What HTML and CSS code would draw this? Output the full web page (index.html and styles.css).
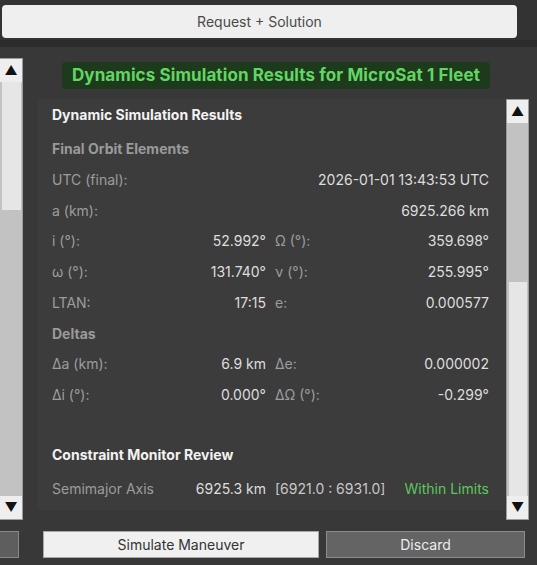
FILE: index.html
```html
<!DOCTYPE html>
<html lang="en">
<head>
    <meta charset="UTF-8">
    <meta name="viewport" content="width=device-width, initial-scale=1.0">
    <title>Dynamics Simulation Results</title>
    <link rel="stylesheet" href="styles.css">
</head>
<body>
    <div class="topbar">
        <button class="tab-button">Request + Solution</button>
    </div>
    <div class="divider"></div>

    <div class="main">
        <div class="scrollbar scrollbar-left">
            <div class="arrow">&#9650;</div>
            <div class="track">
                <div class="thumb thumb-left"></div>
            </div>
            <div class="arrow">&#9660;</div>
        </div>

        <div class="panel">
            <div class="title-wrap">
                <div class="title">Dynamics Simulation Results for MicroSat 1 Fleet</div>
            </div>

            <div class="results">
                <div class="card">
                    <div class="heading">Dynamic Simulation Results</div>

                    <div class="subheading first">Final Orbit Elements</div>
                    <div class="row">
                        <span class="label">UTC (final):</span>
                        <span class="value">2026-01-01 13:43:53 UTC</span>
                    </div>
                    <div class="row">
                        <span class="label">a (km):</span>
                        <span class="value">6925.266 km</span>
                    </div>
                    <div class="row split">
                        <div class="pair"><span class="label">i (°):</span><span class="value">52.992°</span></div>
                        <div class="pair"><span class="label">Ω (°):</span><span class="value">359.698°</span></div>
                    </div>
                    <div class="row split">
                        <div class="pair"><span class="label">ω (°):</span><span class="value">131.740°</span></div>
                        <div class="pair"><span class="label">ν (°):</span><span class="value">255.995°</span></div>
                    </div>
                    <div class="row split">
                        <div class="pair"><span class="label">LTAN:</span><span class="value">17:15</span></div>
                        <div class="pair"><span class="label">e:</span><span class="value">0.000577</span></div>
                    </div>

                    <div class="subheading">Deltas</div>
                    <div class="row split">
                        <div class="pair"><span class="label">Δa (km):</span><span class="value">6.9 km</span></div>
                        <div class="pair"><span class="label">Δe:</span><span class="value">0.000002</span></div>
                    </div>
                    <div class="row split">
                        <div class="pair"><span class="label">Δi (°):</span><span class="value">0.000°</span></div>
                        <div class="pair"><span class="label">ΔΩ (°):</span><span class="value">-0.299°</span></div>
                    </div>

                    <div class="heading monitor">Constraint Monitor Review</div>
                    <div class="row split check">
                        <div class="pair"><span class="label">Semimajor Axis</span><span class="value">6925.3 km</span></div>
                        <div class="pair"><span class="label range">[6921.0 : 6931.0]</span><span class="status">Within Limits</span></div>
                    </div>
                </div>

                <div class="scrollbar scrollbar-right">
                    <div class="arrow">&#9650;</div>
                    <div class="track">
                        <div class="thumb thumb-right"></div>
                    </div>
                    <div class="arrow">&#9660;</div>
                </div>
            </div>
        </div>
    </div>

    <div class="actions">
        <button class="btn btn-stub"></button>
        <button class="btn btn-light">Simulate Maneuver</button>
        <button class="btn btn-dark">Discard</button>
    </div>
</body>
</html>
```

FILE: styles.css
```css
/* Dark dashboard theme */
body {
    margin: 0;
    width: 537px;
    height: 565px;
    overflow: hidden;
    background-color: #383838;
    font-family: Inter, "Noto Sans", sans-serif;
    font-size: 14px;
    color: #dcdcdc;
}

.topbar {
    height: 40px;
    padding: 5px 20px 0 2px;
    box-sizing: border-box;
    background-color: #333;
}
.tab-button {
    width: 100%;
    height: 33px;
    border: none;
    border-radius: 4px;
    background-color: #efefef;
    color: #4a4a4a;
    font-family: inherit;
    font-size: 14px;
}
.divider {
    height: 7px;
    background-color: #2c2c2c;
}

.main {
    display: flex;
    padding-top: 11px;
    height: 462px;
}

/* Scrollbars */
.scrollbar {
    display: flex;
    flex-direction: column;
    box-sizing: border-box;
    border: 1px solid #9c9c9c;
    background-color: #c2c2c2;
}
.scrollbar-left {
    width: 23px;
    height: 462px;
    border-left: none;
}
.scrollbar-right {
    width: 23px;
    height: 421px;
    margin-left: 1px;
}
.arrow {
    height: 23px;
    flex-shrink: 0;
    background-color: #eeeeee;
    color: #111;
    font-size: 13px;
    line-height: 23px;
    text-align: center;
}
.track {
    flex: 1;
    position: relative;
}
.thumb {
    position: absolute;
    left: 2px;
    right: 1px;
    background-color: #e6e6e6;
}
.thumb-left {
    top: 0;
    height: 128px;
}
.thumb-right {
    bottom: 0;
    height: 214px;
}

/* Results panel */
.panel {
    flex: 1;
    padding-left: 15px;
}
.title-wrap {
    display: flex;
    justify-content: center;
    padding-right: 23px;
    margin-top: 4px;
}
.title {
    height: 27px;
    padding: 0 10px;
    border-radius: 4px;
    background-color: #1d3a1d;
    color: #62d662;
    font-size: 17px;
    font-weight: 700;
    line-height: 27px;
    letter-spacing: 0.1px;
}
.results {
    display: flex;
    margin-top: 10px;
}
.card {
    width: 467px;
    height: 411px;
    box-sizing: border-box;
    padding: 0 16px 0 14px;
    background-color: #3c3c3c;
}
.heading {
    height: 32px;
    line-height: 32px;
    font-weight: 700;
    color: #f2f2f2;
}
.heading.monitor {
    margin-top: 28px;
}
.subheading {
    line-height: 30.75px;
    font-weight: 700;
    color: #9a9a9a;
}
.subheading.first {
    margin-top: 3px;
}
.row {
    display: flex;
    justify-content: space-between;
    line-height: 30.75px;
}
.row.split {
    display: grid;
    grid-template-columns: 1fr 1fr;
    column-gap: 9px;
}
.row.check {
    margin-top: 3px;
}
.pair {
    display: flex;
    justify-content: space-between;
}
.label {
    color: #9c9c9c;
}
.label.range {
    color: #c8c8c8;
}
.value {
    color: #dedede;
}
.status {
    color: #5cc75c;
}

/* Bottom action buttons */
.actions {
    display: flex;
    padding-top: 11px;
}
.btn {
    height: 27px;
    box-sizing: border-box;
    font-family: inherit;
    font-size: 14px;
}
.btn-stub {
    width: 19px;
    border: 1px solid #888;
    border-left: none;
    background-color: #5e5e5e;
}
.btn-light {
    width: 276px;
    margin-left: 24px;
    border: 1px solid #a8a8a8;
    background-color: #f0f0f0;
    color: #333;
}
.btn-dark {
    width: 199px;
    margin-left: 7px;
    border: 1px solid #8c8c8c;
    background-color: #646464;
    color: #ececec;
}
```
